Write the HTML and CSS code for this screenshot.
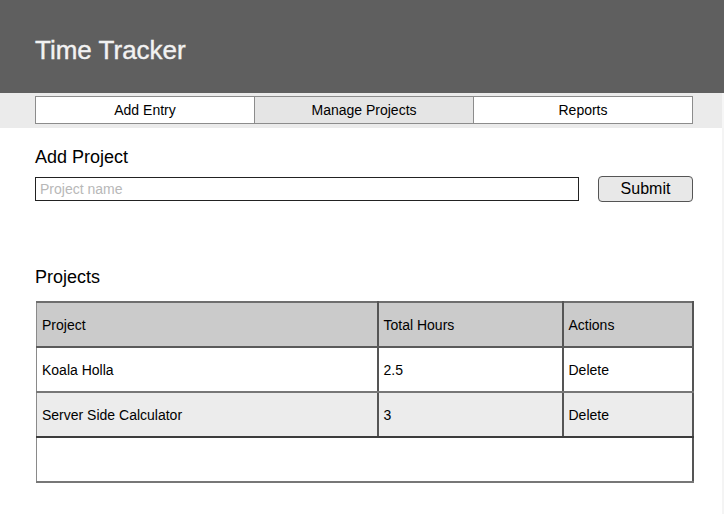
FILE: index.html
```html
<!DOCTYPE html>
<html lang="en">
<head>
<meta charset="utf-8">
<title>Time Tracker</title>
<link rel="stylesheet" href="styles.css">
</head>
<body>
<header class="app-header">
  <h1 class="app-title">Time Tracker</h1>
</header>
<nav class="nav-bar">
  <div class="tabs">
    <a class="tab">Add Entry</a>
    <a class="tab tab-active">Manage Projects</a>
    <a class="tab">Reports</a>
  </div>
</nav>
<main class="content">
  <h2 class="section-title">Add Project</h2>
  <form class="add-form">
    <input class="name-input" type="text" placeholder="Project name">
    <button class="submit-btn" type="button">Submit</button>
  </form>
  <h2 class="section-title projects-title">Projects</h2>
  <table class="projects-table">
    <colgroup>
      <col class="col-project">
      <col class="col-hours">
      <col class="col-actions">
    </colgroup>
    <thead>
      <tr class="row-head"><th>Project</th><th>Total Hours</th><th>Actions</th></tr>
    </thead>
    <tbody>
      <tr class="row-odd"><td>Koala Holla</td><td>2.5</td><td>Delete</td></tr>
      <tr class="row-even"><td>Server Side Calculator</td><td>3</td><td>Delete</td></tr>
      <tr class="row-empty"><td colspan="3"></td></tr>
    </tbody>
  </table>
</main>
</body>
</html>
```
FILE: styles.css
```css
html, body {
  margin: 0;
  padding: 0;
  background: #ffffff;
  font-family: "Liberation Sans", Arial, Helvetica, sans-serif;
  color: #000;
}

.app-header {
  background: #5f5f5f;
  height: 93px;
  box-sizing: border-box;
  padding: 35px 0 0 35px;
}

.app-title {
  margin: 0;
  font-size: 26px;
  line-height: 30px;
  font-weight: normal;
  color: #f2f2f2;
  -webkit-text-stroke: 0.4px #f2f2f2;
}

.nav-bar {
  background: #ebebeb;
  height: 35px;
  box-sizing: border-box;
  padding: 3px 29px 0 35px;
  border-right: 2px solid #f6f6f6;
}

.tabs {
  display: flex;
  border: 1px solid #8c8c8c;
  height: 28px;
  box-sizing: border-box;
}

.tab {
  flex: 1;
  background: #ffffff;
  text-align: center;
  font-size: 14px;
  line-height: 26px;
  color: #000;
}

.tab + .tab {
  border-left: 1px solid #8c8c8c;
}

.tab-active {
  background: #e5e5e5;
}

.content {
  padding: 19px 29px 32px 35px;
  border-left: 2px solid #f4f4f4;
  border-right: 2px solid #f4f4f4;
  margin-left: -2px;
  min-height: 354px;
}

.section-title {
  margin: 0;
  font-size: 18px;
  line-height: 21px;
  font-weight: normal;
}

.add-form {
  display: flex;
  align-items: center;
  margin: 8px 0 0 0;
  height: 26px;
}

.name-input {
  width: 544px;
  height: 24px;
  box-sizing: border-box;
  border: 1px solid #222;
  padding: 0 4px;
  margin: 0;
  font-family: "Liberation Sans", Arial, sans-serif;
  font-size: 14px;
  outline: none;
}

.name-input::placeholder {
  color: #b8b8b8;
}

.submit-btn {
  margin-left: 19px;
  width: 95px;
  height: 26px;
  box-sizing: border-box;
  background: #e8e8e8;
  border: 1px solid #555;
  border-radius: 4px;
  font-family: "Liberation Sans", Arial, sans-serif;
  font-size: 16px;
  color: #000;
  padding: 0;
}

.projects-title {
  margin-top: 65px;
}

.projects-table {
  margin: 13px 0 0 1px;
  width: 656px;
  table-layout: fixed;
  border-collapse: collapse;
  border-top: 2px solid #6e6e6e;
  border-right: 2px solid #777;
  border-bottom: 2px solid #777;
  border-left: 1px solid #8a8a8a;
  font-size: 14px;
}

.col-project { width: 341px; }
.col-hours { width: 185px; }
.col-actions { width: 130px; }

.projects-table th,
.projects-table td {
  height: 43px;
  padding: 0 5px;
  text-align: left;
  font-weight: normal;
  vertical-align: middle;
  border-left: 2px solid #555;
  border-right: 2px solid #555;
  border-bottom: 2px solid #6a6a6a;
}

.projects-table th:first-child,
.projects-table td:first-child {
  border-left: 1px solid #8a8a8a;
}

.row-head th {
  background: #cbcbcb;
  border-bottom: 2px solid #5a5a5a;
}

.row-odd td {
  background: #ffffff;
  border-bottom: 2px solid #777;
}

.row-even td {
  background: #ececec;
  border-bottom: 2px solid #3c3c3c;
}

.row-empty td {
  background: #ffffff;
  border-bottom: 2px solid #777;
}
```
